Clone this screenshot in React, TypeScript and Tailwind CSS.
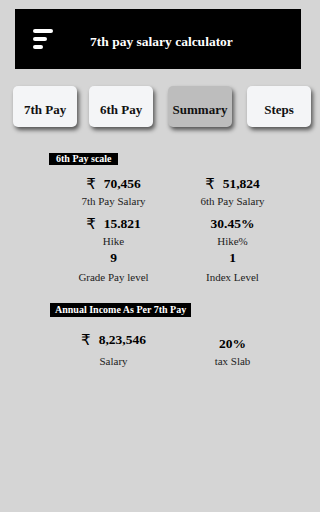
import React from "react";

const serif = { fontFamily: '"Liberation Serif", "Times New Roman", serif' };

function Rupee() {
  return (
    <span
      className="mr-[8px] text-[15px] font-normal leading-[16px]"
      style={{ fontFamily: '"DejaVu Sans", "Noto Sans", sans-serif' }}
    >
      ₹
    </span>
  );
}

function Cell({
  value,
  label,
  rupee,
  valueClass = "",
  labelClass = "mt-[2px]",
}: {
  value: string;
  label: string;
  rupee?: boolean;
  valueClass?: string;
  labelClass?: string;
}) {
  return (
    <div className="flex flex-col items-center">
      <div className={`flex h-[16px] items-center text-[13.5px] font-bold leading-[16px] text-black ${valueClass}`}>
        {rupee && <Rupee />}
        <span>{value}</span>
      </div>
      <div className={`h-[14px] text-[11px] leading-[14px] text-[#222] ${labelClass}`}>{label}</div>
    </div>
  );
}

function TabButton({ label, active, className = "" }: { label: string; active?: boolean; className?: string }) {
  return (
    <div
      className={`flex h-[41px] w-[64px] items-center justify-center rounded-[5px] pt-[6px] text-[13px] font-bold text-[#111] shadow-[2px_3px_4px_rgba(0,0,0,0.6)] ${
        active ? "bg-[#bdbdbd]" : "bg-[#f4f5f7]"
      } ${className}`}
    >
      {label}
    </div>
  );
}

export default function App() {
  return (
    <div className="h-[512px] w-[320px] overflow-hidden bg-[#d5d5d5]" style={serif}>
      <div className="ml-[15px] mt-[9px] flex h-[60px] w-[286px] items-center bg-black pl-[18px]">
        <div className="flex flex-col gap-[4.3px]">
          <div className="h-[3.7px] w-[20px] rounded-full bg-white" />
          <div className="h-[3.7px] w-[14px] rounded-full bg-white" />
          <div className="h-[3.7px] w-[10px] rounded-full bg-white" />
        </div>
        <div className="ml-[37px] pt-[7px] text-[13.5px] font-bold text-white">7th pay salary calculator</div>
      </div>

      <div className="ml-[13px] mt-[17px] flex">
        <TabButton label="7th Pay" />
        <TabButton label="6th Pay" className="ml-[12px]" />
        <TabButton label="Summary" active className="ml-[15px]" />
        <TabButton label="Steps" className="ml-[15px]" />
      </div>

      <div className="ml-[49px] mt-[26px] inline-block h-[12px] bg-black pl-[7px] pr-[6px] text-[10px] font-bold leading-[12px] text-white">
        6th Pay scale
      </div>

      <div className="ml-[54px] mt-[7px] grid w-[238px] grid-cols-2">
        <Cell rupee value="70,456" label="7th Pay Salary" />
        <Cell rupee value="51,824" label="6th Pay Salary" />
        <Cell rupee value="15.821" label="Hike" valueClass="mt-[8px]" />
        <Cell value="30.45%" label="Hike%" valueClass="mt-[8px]" />
        <Cell value="9" label="Grade Pay level" valueClass="mt-[2px]" labelClass="mt-[4px]" />
        <Cell value="1" label="Index Level" valueClass="mt-[2px]" labelClass="mt-[4px]" />
      </div>

      <div className="ml-[50px] mt-[19px] inline-block h-[14px] bg-black pl-[5px] pr-[5px] text-[10px] font-bold leading-[14px] text-white">
        Annual Income As Per 7th Pay
      </div>

      <div className="ml-[54px] mt-[12px] grid w-[238px] grid-cols-2">
        <Cell rupee value="8,23,546" label="Salary" labelClass="mt-[6px]" />
        <Cell value="20%" label="tax Slab" valueClass="mt-[4px]" labelClass="mt-[2px]" />
      </div>
    </div>
  );
}
